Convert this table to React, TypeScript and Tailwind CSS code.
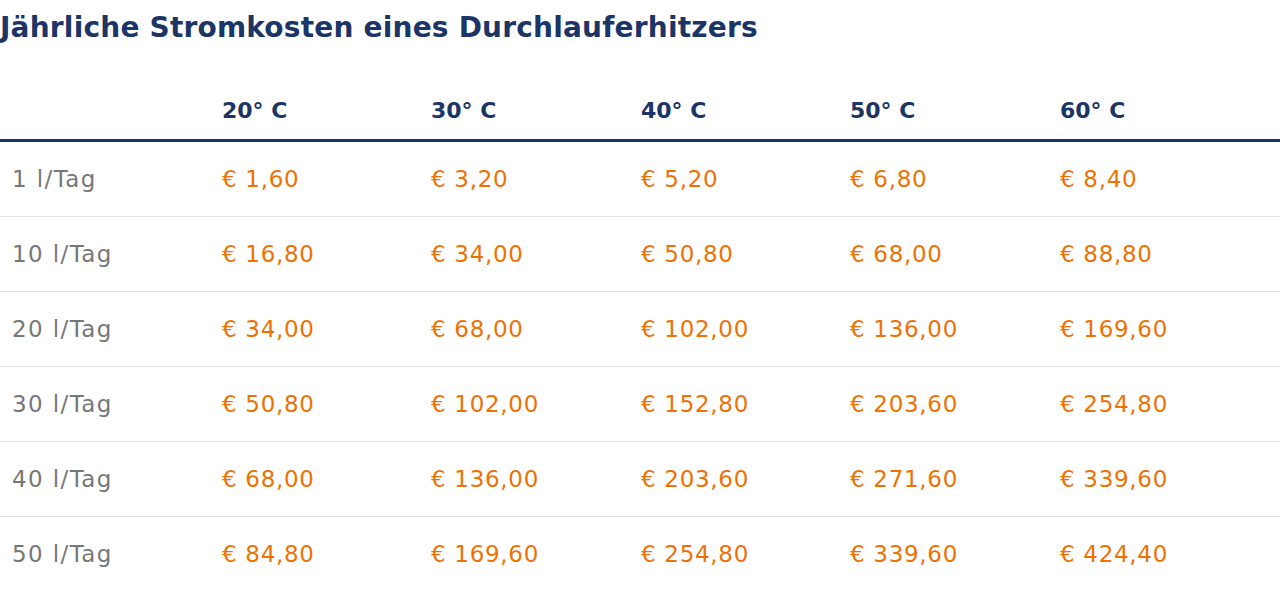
const temps = ['20° C', '30° C', '40° C', '50° C', '60° C'];

const rows: [string, string[]][] = [
  ['1 l/Tag', ['1,60', '3,20', '5,20', '6,80', '8,40']],
  ['10 l/Tag', ['16,80', '34,00', '50,80', '68,00', '88,80']],
  ['20 l/Tag', ['34,00', '68,00', '102,00', '136,00', '169,60']],
  ['30 l/Tag', ['50,80', '102,00', '152,80', '203,60', '254,80']],
  ['40 l/Tag', ['68,00', '136,00', '203,60', '271,60', '339,60']],
  ['50 l/Tag', ['84,80', '169,60', '254,80', '339,60', '424,40']],
];

const cols = 'grid grid-cols-[210px_209px_210px_209px_210px_1fr]';

export default function App() {
  return (
    <div className="w-[1280px] bg-white font-['DejaVu_Sans',sans-serif]">
      <h1 className="h-[56px] leading-[56px] text-[28px] font-bold text-[#1b3566] tracking-[0.2px]">
        Jährliche Stromkosten eines Durchlauferhitzers
      </h1>
      <div className={`${cols} h-[86px] border-b-[3px] border-[#1b3566] items-center pt-[25px]`}>
        <div />
        {temps.map((t) => (
          <div key={t} className="pl-[12px] text-[22px] font-bold text-[#1b3566]">
            {t}
          </div>
        ))}
      </div>
      {rows.map(([label, values]) => (
        <div key={label} className={`${cols} h-[75px] border-b border-[#e2e2e2] items-center`}>
          <div className="pl-[12px] text-[23px] text-[#777777] tracking-[1.4px]">{label}</div>
          {values.map((v, i) => (
            <div key={i} className="pl-[12px] text-[23px] text-[#ee7203] tracking-[0.7px]">
              € {v}
            </div>
          ))}
        </div>
      ))}
    </div>
  );
}
